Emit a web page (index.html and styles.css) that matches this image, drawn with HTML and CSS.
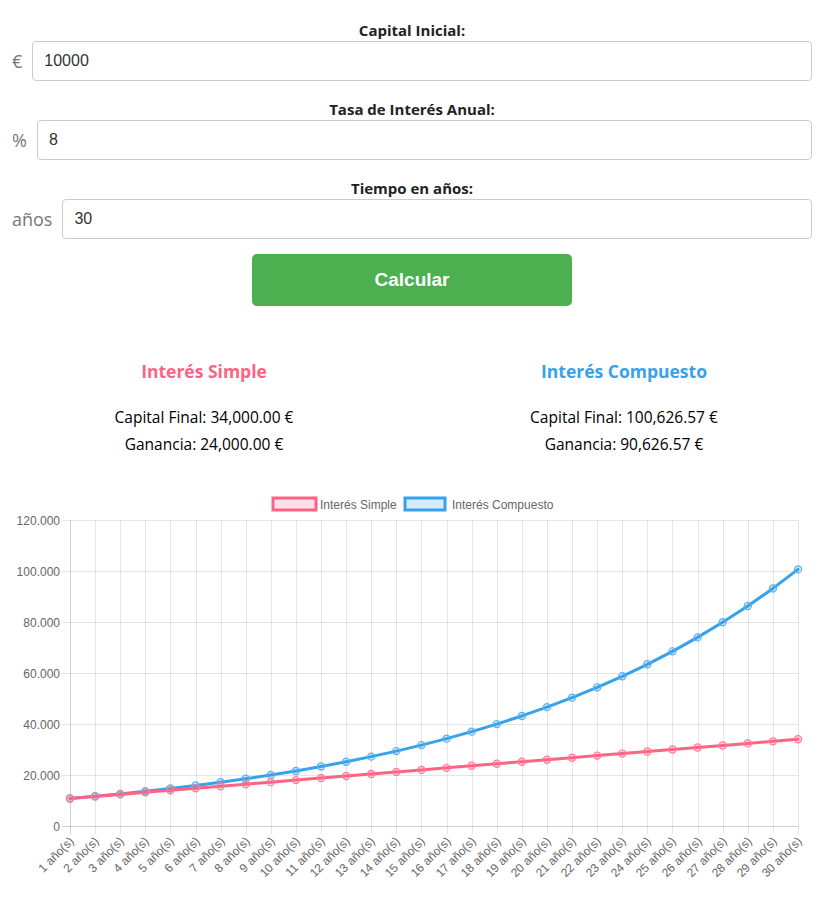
FILE: index.html
```html
<!DOCTYPE html>
<html lang="es">
<head>
<meta charset="utf-8">
<title>Calculadora de Interés</title>
<link rel="stylesheet" href="styles.css">
</head>
<body>
<form class="calc">
  <div class="field">
    <label class="field-label" for="capital">Capital Inicial:</label>
    <div class="field-row"><span class="prefix">€</span><input id="capital" class="field-input" type="text" value="10000"></div>
  </div>
  <div class="field">
    <label class="field-label" for="tasa">Tasa de Interés Anual:</label>
    <div class="field-row"><span class="prefix">%</span><input id="tasa" class="field-input" type="text" value="8"></div>
  </div>
  <div class="field">
    <label class="field-label" for="tiempo">Tiempo en años:</label>
    <div class="field-row"><span class="prefix">años</span><input id="tiempo" class="field-input" type="text" value="30"></div>
  </div>
  <button type="button" class="btn">Calcular</button>
</form>
<section class="results">
  <div class="result">
    <h2 class="result-title simple">Interés Simple</h2>
    <p class="result-line">Capital Final: 34,000.00 €</p>
    <p class="result-line">Ganancia: 24,000.00 €</p>
  </div>
  <div class="result">
    <h2 class="result-title compound">Interés Compuesto</h2>
    <p class="result-line">Capital Final: 100,626.57 €</p>
    <p class="result-line">Ganancia: 90,626.57 €</p>
  </div>
</section>
<div class="chart">
  <svg id="chart" class="chart-svg" width="820" height="409" viewBox="0 0 820 409" xmlns="http://www.w3.org/2000/svg">
    <g class="legend">
      <rect class="legend-box simple-box" x="273" y="9" width="43" height="12"></rect>
      <text class="legend-text" x="320" y="20">Interés Simple</text>
      <rect class="legend-box compound-box" x="405" y="9" width="40" height="12"></rect>
      <text class="legend-text" x="452" y="20">Interés Compuesto</text>
    </g>
  </svg>
</div>
<script src="script.js"></script>
</body>
</html>
```

FILE: styles.css
```css
html, body {
  margin: 0;
  padding: 0;
  background: #fff;
}
body {
  font-family: "Open Sans", "Noto Sans", sans-serif;
  color: #000;
  width: 820px;
}
.calc {
  display: flex;
  flex-direction: column;
  padding: 20px 8px 0 12px;
  margin: 0;
}
.field + .field {
  margin-top: 18px;
}
.field-label {
  display: block;
  text-align: center;
  font-weight: 700;
  font-size: 15px;
  line-height: 20px;
  color: #222;
  margin-bottom: 1px;
}
.field-row {
  display: flex;
  align-items: center;
  gap: 10px;
}
.prefix {
  font-size: 18px;
  line-height: 24px;
  font-weight: 500;
  color: #777;
}
.field-input {
  flex: 1;
  min-width: 0;
  height: 40px;
  box-sizing: border-box;
  border: 1px solid #ccc;
  border-radius: 4px;
  padding: 0 11px;
  font: 16px "Liberation Sans", Arial, sans-serif;
  color: #333;
  background: #fff;
  outline: none;
}
.btn {
  align-self: center;
  margin-top: 15px;
  width: 320px;
  height: 52px;
  border: none;
  border-radius: 5px;
  background: #4caf50;
  color: #fff;
  font: 700 19px "Liberation Sans", Arial, sans-serif;
  cursor: pointer;
}
.results {
  display: flex;
  justify-content: center;
  gap: 120px;
  padding: 0 6px 0 14px;
  margin-top: 53px;
}
.result {
  width: 300px;
  text-align: center;
}
.result-title {
  margin: 0 0 21px;
  font-size: 17.5px;
  line-height: 24px;
  font-weight: 700;
}
.result-title.simple { color: #ff6384; }
.result-title.compound { color: #36a2eb; }
.result-line {
  margin: 0;
  font-size: 15.5px;
  font-weight: 500;
  line-height: 27px;
  color: #000;
}
.chart {
  margin-top: 31px;
}
.chart-svg {
  display: block;
}
.legend-box {
  stroke-width: 3;
}
.simple-box {
  fill: rgba(255, 99, 132, 0.2);
  stroke: #ff6384;
}
.compound-box {
  fill: rgba(54, 162, 235, 0.2);
  stroke: #36a2eb;
}
.legend-text, .tick-label {
  font: 12px "Liberation Sans", Arial, sans-serif;
  fill: #666;
}
.grid-line {
  stroke: rgba(0, 0, 0, 0.1);
  stroke-width: 1;
}
.axis-line {
  stroke: rgba(0, 0, 0, 0.18);
  stroke-width: 1;
}
.series {
  fill: none;
  stroke-width: 3;
  stroke-linejoin: round;
  stroke-linecap: round;
}
.series.simple { stroke: #ff6384; }
.series.compound { stroke: #36a2eb; }
.pt {
  stroke-width: 1.2;
}
.pt.simple {
  fill: rgba(255, 99, 132, 0.25);
  stroke: #ff7c97;
}
.pt.compound {
  fill: rgba(54, 162, 235, 0.25);
  stroke: #5ab2ee;
}
```

FILE: script.js
```js
(function () {
  var svg = document.getElementById('chart');
  var NS = 'http://www.w3.org/2000/svg';
  var OY = 490;
  var x0 = 70, x1 = 798;
  var yTop = 521 - OY, yBot = 827 - OY;
  var n = 30, maxV = 120000;

  function xs(i) { return x0 + (x1 - x0) * i / (n - 1); }
  function ys(v) { return yBot - (yBot - yTop) * v / maxV; }
  function el(tag, attrs, parent, text) {
    var e = document.createElementNS(NS, tag);
    for (var k in attrs) e.setAttribute(k, attrs[k]);
    if (text !== undefined) e.textContent = text;
    (parent || svg).appendChild(e);
    return e;
  }
  function fmt(v) {
    return String(v).replace(/\B(?=(\d{3})+(?!\d))/g, '.');
  }

  var grid = el('g', {});
  for (var t = 0; t <= 6; t++) {
    var v = t * 20000, y = ys(v) + 0.5;
    el('line', { x1: x0 - 8, y1: y, x2: x1 + 0.5, y2: y, 'class': t === 0 ? 'axis-line' : 'grid-line' }, grid);
    el('text', { x: x0 - 10, y: y + 4.5, 'text-anchor': 'end', 'class': 'tick-label' }, grid, fmt(v));
  }
  for (var i = 0; i < n; i++) {
    var x = Math.round(xs(i)) + 0.5;
    el('line', { x1: x, y1: yTop + 0.5, x2: x, y2: yBot + 8, 'class': i === 0 ? 'axis-line' : 'grid-line' }, grid);
    el('text', {
      'text-anchor': 'end',
      'class': 'tick-label',
      transform: 'translate(' + (x + 4) + ',' + (yBot + 16) + ') rotate(-45)'
    }, grid, (i + 1) + ' año(s)');
  }

  var simple = [], compound = [];
  for (var k = 1; k <= n; k++) {
    simple.push(10000 * (1 + 0.08 * k));
    compound.push(10000 * Math.pow(1.08, k));
  }
  function draw(data, cls) {
    var g = el('g', {});
    var pts = data.map(function (v, i) { return xs(i).toFixed(2) + ',' + ys(v).toFixed(2); }).join(' ');
    el('polyline', { points: pts, 'class': 'series ' + cls }, g);
    data.forEach(function (v, i) {
      el('circle', { cx: xs(i), cy: ys(v), r: 3.6, 'class': 'pt ' + cls }, g);
    });
  }
  draw(compound, 'compound');
  draw(simple, 'simple');
})();
```
